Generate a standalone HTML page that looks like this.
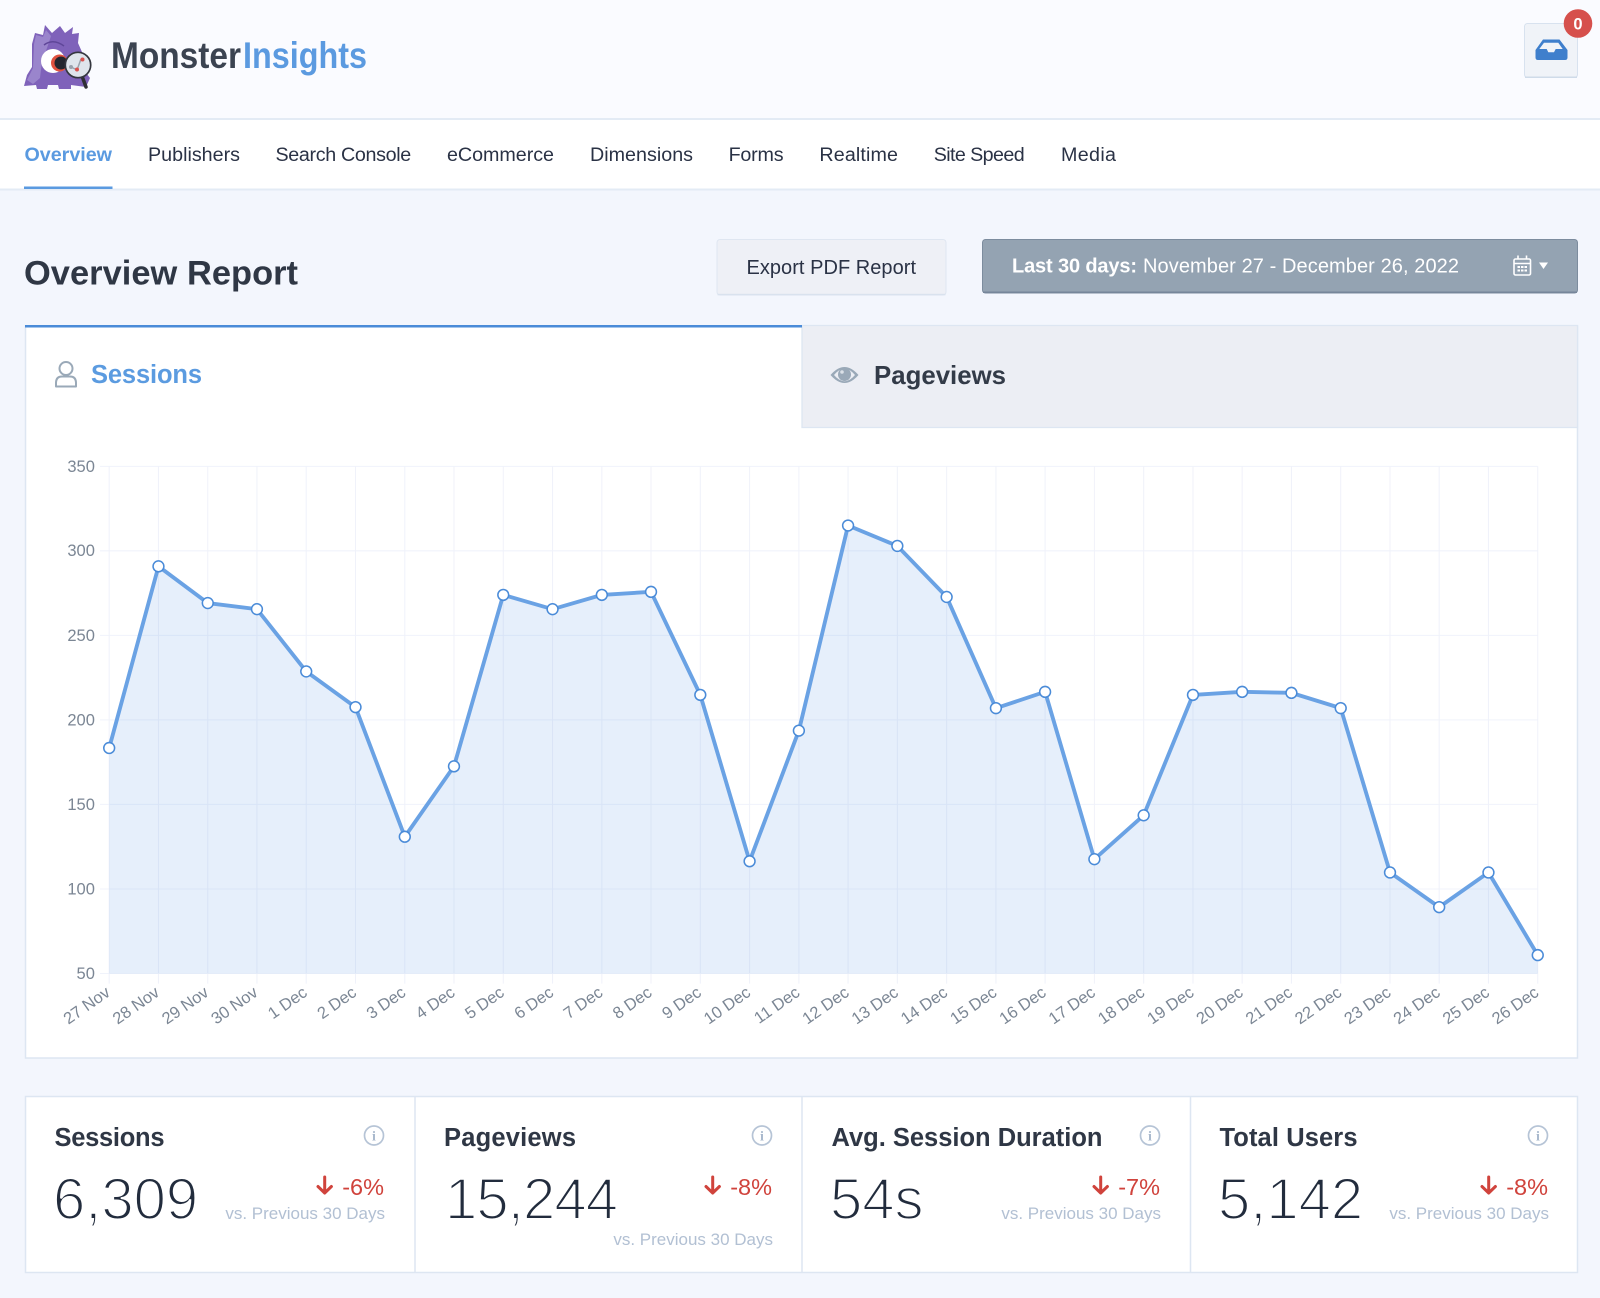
<!DOCTYPE html>
<html lang="en"><head><meta charset="utf-8"><title>Overview Report</title>
<style>
html,body{margin:0;padding:0;width:1600px;height:1298px;overflow:hidden;background:#f3f6fd}
svg{display:block;font-family:"Liberation Sans",Arial,sans-serif}
.nav{font-size:19.7px;fill:#2a3245}
.t{font-size:25.5px;font-weight:700;fill:#2f3745}
.big{font-size:58px;fill:#222c3d;stroke:#fff;stroke-width:1.9px}
.d{font-size:23.5px;fill:#d0433c;text-anchor:end}
.vs{font-size:17px;fill:#b2c0d3;text-anchor:end}
.y{font-size:16.2px;fill:#7b8694;text-anchor:end}
.x{font-size:16.2px;fill:#7b8694;text-anchor:end}
</style></head><body>
<svg width="1600" height="1298" viewBox="0 0 1600 1298" xmlns="http://www.w3.org/2000/svg">
<rect width="1600" height="1298" fill="#f3f6fd"/>
<!-- header -->
<rect width="1600" height="119" fill="#fafbff"/>
<rect y="118.5" width="1600" height="71" fill="#fff"/>
<rect y="118" width="1600" height="2" fill="#e3ebf5"/>
<rect y="188.5" width="1600" height="2" fill="#e3ebf5"/>
<!-- logo -->
<path d="M24 86L27 75L32 67L32 44L35 33L43 35L45 25L52 33L60 26L65 33L73 27L72 34L79 33L78 43L82 52L84 70L90 78L86 87L71 85L71 89L59 89L58 85L48 85L47 89L37 89L36 85Z" fill="#7f62ba"/>
<path d="M34 44L36 35L43 37L46 30L51 36L47 48L42 62L40 78L33 84L27 80L33 68Z" fill="#a594d4" opacity=".7"/>
<path d="M44 45Q53 38 64 46" fill="none" stroke="#5f4699" stroke-width="1.500"/>
<circle cx="53" cy="61" r="12" fill="#fff"/>
<circle cx="59.500" cy="63" r="8.500" fill="#e0523f"/>
<circle cx="61" cy="63" r="6.500" fill="#23262e"/>
<path d="M82 76L86 87" stroke="#2f2f35" stroke-width="3.500" stroke-linecap="round"/>
<circle cx="78" cy="65" r="12.700" fill="#dfe5ec" stroke="#34373f" stroke-width="1.700"/>
<path d="M71 67L77 70L81 59" fill="none" stroke="#9aa2ad" stroke-width="1.500"/>
<circle cx="71" cy="67" r="2" fill="#9aa2ad"/><circle cx="77" cy="69.500" r="2" fill="#d9534f"/><circle cx="82.500" cy="59.500" r="2" fill="#d9534f"/>
<text x="111" y="68" font-size="37" font-weight="700" fill="#3b4351" textLength="130" lengthAdjust="spacingAndGlyphs">Monster</text>
<text x="243" y="68" font-size="37" font-weight="700" fill="#5b9ae0" textLength="124" lengthAdjust="spacingAndGlyphs">Insights</text>
<!-- inbox -->
<rect x="1524.500" y="23.500" width="53" height="54" rx="3" fill="#f0f3f8" stroke="#d8e2ef"/>
<rect x="1525" y="76.500" width="52" height="1.500" fill="#cfdbe9"/>
<path d="M1543 39.500H1559.500L1567.500 50V57.500Q1567.500 60 1565 60H1538Q1535.500 60 1535.500 57.500V50ZM1544 42.700L1539.300 49H1546.700L1548.300 52.300H1554L1555.700 49H1562.700L1558.300 42.700Z" fill="#3f7fcc" fill-rule="evenodd"/>
<circle cx="1578" cy="23.500" r="14.300" fill="#d6504c"/>
<text x="1578" y="29.500" font-size="16.500" font-weight="700" fill="#fff" text-anchor="middle">0</text>
<!-- nav -->
<text class="nav" x="24.500" y="161" font-weight="700" style="fill:#5a9ae0" textLength="87.500">Overview</text>
<rect x="24" y="186.500" width="88.500" height="2.500" fill="#5a9ae0"/>
<text class="nav" x="148" y="161" textLength="92">Publishers</text>
<text class="nav" x="275.500" y="161" textLength="135.700">Search Console</text>
<text class="nav" x="447" y="161" textLength="107">eCommerce</text>
<text class="nav" x="590" y="161" textLength="103">Dimensions</text>
<text class="nav" x="728.600" y="161" textLength="55">Forms</text>
<text class="nav" x="819.400" y="161" textLength="78.600">Realtime</text>
<text class="nav" x="933.700" y="161" textLength="91">Site Speed</text>
<text class="nav" x="1061" y="161" textLength="55">Media</text>
<!-- title row -->
<text x="24" y="284.500" font-size="34.400" font-weight="700" fill="#2f3745" textLength="274">Overview Report</text>
<rect x="717" y="239.500" width="229" height="55.500" rx="3" fill="#eef0f6" stroke="#dfe6f1"/>
<rect x="717.500" y="293.800" width="228" height="1.500" fill="#d9e2ee"/>
<text x="746.500" y="274" font-size="20" fill="#2a3245" textLength="169.500">Export PDF Report</text>
<rect x="982.500" y="239.500" width="595" height="53.500" rx="3" fill="#94a3b2" stroke="#7c8c9e"/>
<rect x="983" y="291.500" width="594" height="1.500" fill="#76869a"/>
<text x="1012" y="272.500" font-size="20" font-weight="700" fill="#fff" textLength="125">Last 30 days:</text>
<text x="1143" y="272.500" font-size="20" fill="#fff" textLength="316">November 27 - December 26, 2022</text>
<g fill="none" stroke="#fff" stroke-width="1.600"><rect x="1514" y="259" width="16.500" height="16" rx="1.500"/><path d="M1514 263.500H1530.500M1518 255.500V259.500M1526.500 255.500V259.500"/></g>
<path d="M1517.500 266h2.500v2h-2.500zM1521 266h2.500v2H1521zM1524.500 266h2.500v2h-2.500zM1517.500 269.500h2.500v2h-2.500zM1521 269.500h2.500v2H1521zM1524.500 269.500h2.500v2h-2.500z" fill="#fff"/>
<path d="M1539 262.500H1548L1543.500 269Z" fill="#fff"/>
<!-- chart panel -->
<rect x="25.500" y="326" width="1552" height="732" fill="#fff" stroke="#dde6f2" stroke-width="1.500"/>
<rect x="802" y="325.500" width="775.500" height="102" fill="#eceef4" stroke="#dde6f2" stroke-width="1.300"/>
<rect x="25" y="325" width="777" height="2.500" fill="#4a8bd8"/>
<g fill="none" stroke="#9aa9b8" stroke-width="2"><circle cx="66" cy="368.500" r="6.500"/><path d="M56 386.500V383Q56 376.500 62 376.500H70Q76 376.500 76 383V386.500Z" stroke-linejoin="round"/></g>
<text x="91" y="383" font-size="25.500" font-weight="700" fill="#5b9be0" textLength="111">Sessions</text>
<path d="M830.500 375Q844.500 359 858.500 375Q844.500 391 830.500 375ZM834 375Q844.500 387.500 855 375Q844.500 362.500 834 375Z" fill="#9aa9b8" fill-rule="evenodd"/>
<circle cx="844.500" cy="374.500" r="6.500" fill="#9aa9b8"/><circle cx="842" cy="372" r="1.800" fill="#dbe1e8"/>
<text x="874" y="384" font-size="25.800" font-weight="700" fill="#333b48" textLength="132">Pageviews</text>
<!-- chart (drawn in 1568-wide coordinates) -->
<g transform="scale(1.020408)">
<path d="M98 457H1507M98 539.800H1507M98 622.700H1507M98 705.500H1507M98 788.300H1507M98 871.200H1507M98 954H1507" stroke="#f0f3fb" stroke-width="1" fill="none"/>
<path d="M107 457V964M155.300 457V964M203.600 457V964M251.800 457V964M300.100 457V964M348.400 457V964M396.700 457V964M444.900 457V964M493.200 457V964M541.500 457V964M589.800 457V964M638 457V964M686.300 457V964M734.600 457V964M782.900 457V964M831.100 457V964M879.400 457V964M927.700 457V964M976 457V964M1024.200 457V964M1072.500 457V964M1120.800 457V964M1169.100 457V964M1217.300 457V964M1265.600 457V964M1313.900 457V964M1362.200 457V964M1410.400 457V964M1458.700 457V964M1507 457V964" stroke="#f0f2fa" stroke-width="1" fill="none"/>
<path d="M107 954L107 733L155.300 555L203.600 591L251.800 597L300.100 658L348.400 693L396.700 820L444.900 751L493.200 583L541.500 597L589.800 583L638 580L686.300 681L734.600 844L782.900 716L831.100 515L879.400 535L927.700 585L976 694L1024.200 678L1072.500 842L1120.800 799L1169.100 681L1217.300 678L1265.600 679L1313.900 694L1362.200 855L1410.400 889L1458.700 855L1507 936L1507 954Z" fill="#5a96e1" fill-opacity=".15"/>
<polyline points="107,733 155.300,555 203.600,591 251.800,597 300.100,658 348.400,693 396.700,820 444.900,751 493.200,583 541.500,597 589.800,583 638,580 686.300,681 734.600,844 782.900,716 831.100,515 879.400,535 927.700,585 976,694 1024.200,678 1072.500,842 1120.800,799 1169.100,681 1217.300,678 1265.600,679 1313.900,694 1362.200,855 1410.400,889 1458.700,855 1507,936" fill="none" stroke="#6aa2e4" stroke-width="3.800" stroke-linejoin="round"/>
<g fill="#fff" stroke="#4a8bd8" stroke-width="1.500">
<circle cx="107" cy="733" r="5.300"/><circle cx="155.300" cy="555" r="5.300"/><circle cx="203.600" cy="591" r="5.300"/><circle cx="251.800" cy="597" r="5.300"/><circle cx="300.100" cy="658" r="5.300"/><circle cx="348.400" cy="693" r="5.300"/><circle cx="396.700" cy="820" r="5.300"/><circle cx="444.900" cy="751" r="5.300"/><circle cx="493.200" cy="583" r="5.300"/><circle cx="541.500" cy="597" r="5.300"/><circle cx="589.800" cy="583" r="5.300"/><circle cx="638" cy="580" r="5.300"/><circle cx="686.300" cy="681" r="5.300"/><circle cx="734.600" cy="844" r="5.300"/><circle cx="782.900" cy="716" r="5.300"/><circle cx="831.100" cy="515" r="5.300"/><circle cx="879.400" cy="535" r="5.300"/><circle cx="927.700" cy="585" r="5.300"/><circle cx="976" cy="694" r="5.300"/><circle cx="1024.200" cy="678" r="5.300"/><circle cx="1072.500" cy="842" r="5.300"/><circle cx="1120.800" cy="799" r="5.300"/><circle cx="1169.100" cy="681" r="5.300"/><circle cx="1217.300" cy="678" r="5.300"/><circle cx="1265.600" cy="679" r="5.300"/><circle cx="1313.900" cy="694" r="5.300"/><circle cx="1362.200" cy="855" r="5.300"/><circle cx="1410.400" cy="889" r="5.300"/><circle cx="1458.700" cy="855" r="5.300"/><circle cx="1507" cy="936" r="5.300"/>
</g>
<text class="y" x="93" y="462.500">350</text><text class="y" x="93" y="545">300</text><text class="y" x="93" y="628">250</text><text class="y" x="93" y="711">200</text><text class="y" x="93" y="794">150</text><text class="y" x="93" y="876.500">100</text><text class="y" x="93" y="959.500">50</text>
<text class="x" transform="translate(109,975) rotate(-35)">27 Nov</text>
<text class="x" transform="translate(157.300,975) rotate(-35)">28 Nov</text>
<text class="x" transform="translate(205.600,975) rotate(-35)">29 Nov</text>
<text class="x" transform="translate(253.800,975) rotate(-35)">30 Nov</text>
<text class="x" transform="translate(302.100,975) rotate(-35)">1 Dec</text>
<text class="x" transform="translate(350.400,975) rotate(-35)">2 Dec</text>
<text class="x" transform="translate(398.700,975) rotate(-35)">3 Dec</text>
<text class="x" transform="translate(446.900,975) rotate(-35)">4 Dec</text>
<text class="x" transform="translate(495.200,975) rotate(-35)">5 Dec</text>
<text class="x" transform="translate(543.500,975) rotate(-35)">6 Dec</text>
<text class="x" transform="translate(591.800,975) rotate(-35)">7 Dec</text>
<text class="x" transform="translate(640,975) rotate(-35)">8 Dec</text>
<text class="x" transform="translate(688.300,975) rotate(-35)">9 Dec</text>
<text class="x" transform="translate(736.600,975) rotate(-35)">10 Dec</text>
<text class="x" transform="translate(784.900,975) rotate(-35)">11 Dec</text>
<text class="x" transform="translate(833.100,975) rotate(-35)">12 Dec</text>
<text class="x" transform="translate(881.400,975) rotate(-35)">13 Dec</text>
<text class="x" transform="translate(929.700,975) rotate(-35)">14 Dec</text>
<text class="x" transform="translate(978,975) rotate(-35)">15 Dec</text>
<text class="x" transform="translate(1026.200,975) rotate(-35)">16 Dec</text>
<text class="x" transform="translate(1074.500,975) rotate(-35)">17 Dec</text>
<text class="x" transform="translate(1122.800,975) rotate(-35)">18 Dec</text>
<text class="x" transform="translate(1171.100,975) rotate(-35)">19 Dec</text>
<text class="x" transform="translate(1219.300,975) rotate(-35)">20 Dec</text>
<text class="x" transform="translate(1267.600,975) rotate(-35)">21 Dec</text>
<text class="x" transform="translate(1315.900,975) rotate(-35)">22 Dec</text>
<text class="x" transform="translate(1364.200,975) rotate(-35)">23 Dec</text>
<text class="x" transform="translate(1412.400,975) rotate(-35)">24 Dec</text>
<text class="x" transform="translate(1460.700,975) rotate(-35)">25 Dec</text>
<text class="x" transform="translate(1509,975) rotate(-35)">26 Dec</text>
</g>
<!-- stats -->
<rect x="25.500" y="1096.500" width="1552" height="176" fill="#fff" stroke="#dde6f2" stroke-width="1.500"/>
<path d="M415 1096V1273M802 1096V1273M1190.500 1096V1273" stroke="#dde6f2" stroke-width="1.500"/>
<text class="t" x="54.500" y="1146" textLength="110">Sessions</text>
<text class="t" x="444" y="1146" textLength="132">Pageviews</text>
<text class="t" x="831.500" y="1146" textLength="271">Avg. Session Duration</text>
<text class="t" x="1219.500" y="1146" textLength="138">Total Users</text>
<text class="big" x="53" y="1219">6,309</text>
<text class="big" x="445" y="1219" textLength="173">15,244</text>
<text class="big" x="830" y="1219">54s</text>
<text class="big" x="1218" y="1219">5,142</text>
<g fill="none" stroke="#b6c4d6" stroke-width="1.700">
<circle cx="374" cy="1135.500" r="9.500"/><circle cx="762" cy="1135.500" r="9.500"/><circle cx="1150" cy="1135.500" r="9.500"/><circle cx="1538" cy="1135.500" r="9.500"/>
</g>
<g fill="#a9b9cd" font-size="14" font-weight="700" font-family="Liberation Serif,serif" text-anchor="middle">
<text x="374" y="1140.500">i</text><text x="762" y="1140.500">i</text><text x="1150" y="1140.500">i</text><text x="1538" y="1140.500">i</text>
</g>
<g fill="none" stroke="#d0433c" stroke-width="3" stroke-linecap="round" stroke-linejoin="round">
<path d="M324.700 1177V1193M318 1186.500L324.700 1193L331.400 1186.500"/>
<path d="M712.700 1177V1193M706 1186.500L712.700 1193L719.400 1186.500"/>
<path d="M1100.700 1177V1193M1094 1186.500L1100.700 1193L1107.400 1186.500"/>
<path d="M1488.700 1177V1193M1482 1186.500L1488.700 1193L1495.400 1186.500"/>
</g>
<text class="d" x="384" y="1195">-6%</text>
<text class="d" x="772" y="1195">-8%</text>
<text class="d" x="1160" y="1195">-7%</text>
<text class="d" x="1548" y="1195">-8%</text>
<text class="vs" x="385" y="1219">vs. Previous 30 Days</text>
<text class="vs" x="773" y="1245">vs. Previous 30 Days</text>
<text class="vs" x="1161" y="1219">vs. Previous 30 Days</text>
<text class="vs" x="1549" y="1219">vs. Previous 30 Days</text>
</svg>
</body></html>
